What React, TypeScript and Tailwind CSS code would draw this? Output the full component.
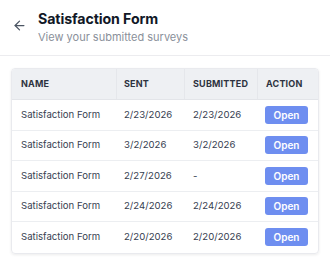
import React from "react";

const rows = [
  { sent: "2/23/2026", submitted: "2/23/2026" },
  { sent: "3/2/2026", submitted: "3/2/2026" },
  { sent: "2/27/2026", submitted: "-" },
  { sent: "2/24/2026", submitted: "2/24/2026" },
  { sent: "2/20/2026", submitted: "2/20/2026" },
];

export default function App() {
  return (
    <div className="w-[330px] h-[275px] bg-white" style={{ fontFamily: "Inter, 'Noto Sans', sans-serif" }}>
      <div className="flex items-start gap-[11px] pl-[12px] pt-[9px] h-[56px] border-b border-[#ececef]">
        <svg className="mt-[9px]" width="15" height="15" viewBox="0 0 24 24" fill="none" stroke="#4b5563" strokeWidth="2" strokeLinecap="round" strokeLinejoin="round">
          <path d="M19 12H5" />
          <path d="M12 19l-7-7 7-7" />
        </svg>
        <div className="flex flex-col">
          <div className="text-[14.2px] font-bold text-[#111827] leading-[19px] tracking-[-0.1px]">Satisfaction Form</div>
          <div className="text-[11px] text-[#8a909a] leading-[16px] mt-[1px]">View your submitted surveys</div>
        </div>
      </div>
      <div className="px-[11px] pt-[12px]">
        <div className="rounded-[4px] border border-[#e9eaee] shadow-[0_1px_3px_rgba(0,0,0,0.08)] overflow-hidden">
          <div className="grid grid-cols-[105px_68px_73px_1fr] h-[31px] bg-[#eef0f3] border-b border-[#e3e5e9] text-[9px] font-bold text-[#2d3340] tracking-[0.2px]">
            <div className="flex items-center pl-[9px] border-r border-[#e5e7eb]">NAME</div>
            <div className="flex items-center pl-[7px] border-r border-[#e5e7eb]">SENT</div>
            <div className="flex items-center pl-[8px] border-r border-[#e5e7eb]">SUBMITTED</div>
            <div className="flex items-center pl-[8px]">ACTION</div>
          </div>
          {rows.map((r, i) => (
            <div
              key={i}
              className={`grid grid-cols-[105px_68px_73px_1fr] h-[30.5px] text-[9.6px] text-[#374151] ${i < rows.length - 1 ? "border-b border-[#eceef1]" : ""}`}
            >
              <div className="flex items-center pl-[9px]">Satisfaction Form</div>
              <div className="flex items-center pl-[7px]">{r.sent}</div>
              <div className="flex items-center pl-[8px]">{r.submitted}</div>
              <div className="flex items-center pl-[7px]">
                <button className="w-[43px] h-[18px] rounded-[3px] bg-[#6e8ef0] text-white text-[10px] font-semibold leading-none">
                  Open
                </button>
              </div>
            </div>
          ))}
        </div>
      </div>
    </div>
  );
}
